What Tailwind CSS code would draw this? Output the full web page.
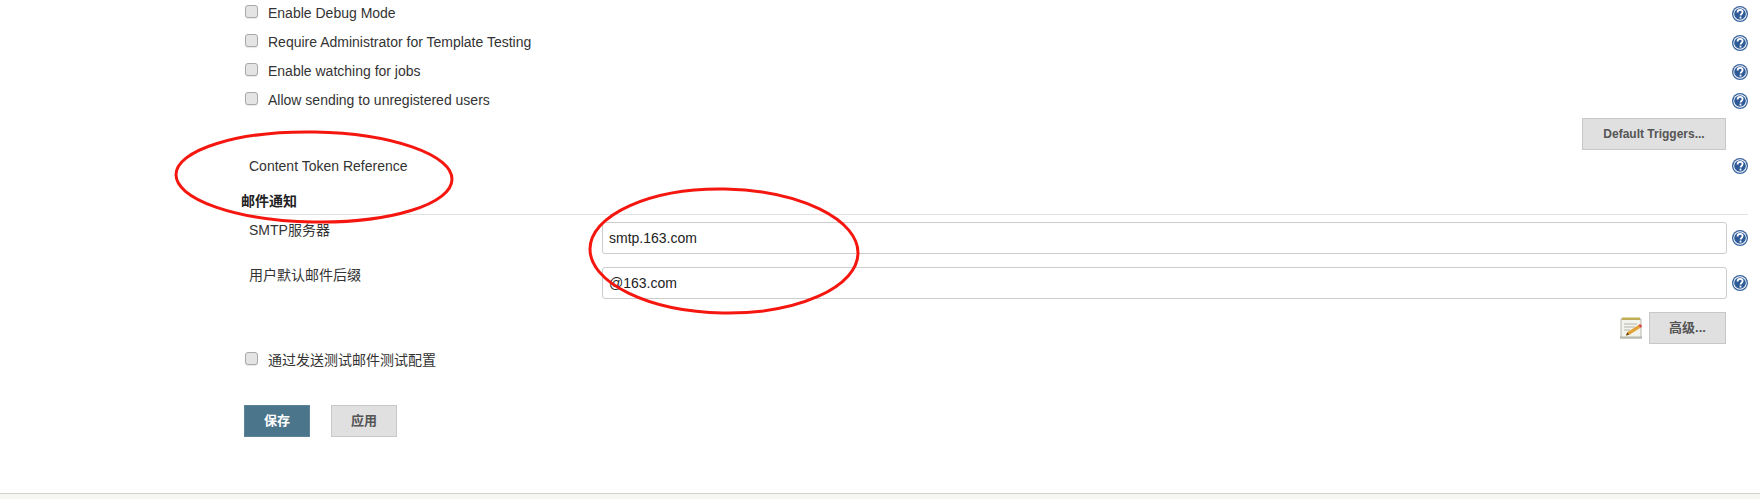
<!DOCTYPE html>
<html lang="en">
<head>
  <meta charset="UTF-8" />
  <title>Jenkins mail config</title>
  <script src="https://cdn.jsdelivr.net/npm/@tailwindcss/browser@4"></script>
</head>
<body class="relative h-[499px] overflow-hidden bg-white text-[#333] text-[14px] font-['Liberation_Sans','Noto_Sans_CJK_SC',sans-serif]">
  <svg class="hidden">
    <symbol id="help" viewBox="0 0 16 16">
      <circle cx="8" cy="8" r="8" fill="#3a659f" />
      <circle cx="8" cy="8" r="6.700" fill="#fff" />
      <circle cx="8" cy="8" r="5.800" fill="#2f5a98" />
      <path d="M5.600 6.400c0-1.600 1-2.500 2.500-2.500s2.500.9 2.500 2.200c0 1.900-2 1.800-2 3.300" fill="none" stroke="#fff" stroke-width="1.800" />
      <rect x="7.600" y="10.600" width="1.800" height="1.900" fill="#fff" />
    </symbol>
  </svg>

  <div class="flex flex-col pl-[241px] pr-[12px] -mt-[1px]">
    <!-- Checkbox options -->
    <div class="flex h-[29px] items-center justify-between">
      <label class="flex items-center"><span class="ml-[4px] mr-[10px] mb-[4px] h-[13px] w-[13px] rounded-[3px] border border-[#a9a9a9] bg-[#e4e4e4] shadow-[0_1px_1px_#e8e8e8]"></span>Enable Debug Mode</label>
      <svg class="h-[16px] w-[16px]"><use href="#help" /></svg>
    </div>
    <div class="flex h-[29px] items-center justify-between">
      <label class="flex items-center"><span class="ml-[4px] mr-[10px] mb-[4px] h-[13px] w-[13px] rounded-[3px] border border-[#a9a9a9] bg-[#e4e4e4] shadow-[0_1px_1px_#e8e8e8]"></span>Require Administrator for Template Testing</label>
      <svg class="h-[16px] w-[16px]"><use href="#help" /></svg>
    </div>
    <div class="flex h-[29px] items-center justify-between">
      <label class="flex items-center"><span class="ml-[4px] mr-[10px] mb-[4px] h-[13px] w-[13px] rounded-[3px] border border-[#a9a9a9] bg-[#e4e4e4] shadow-[0_1px_1px_#e8e8e8]"></span>Enable watching for jobs</label>
      <svg class="h-[16px] w-[16px]"><use href="#help" /></svg>
    </div>
    <div class="flex h-[29px] items-center justify-between">
      <label class="flex items-center"><span class="ml-[4px] mr-[10px] mb-[4px] h-[13px] w-[13px] rounded-[3px] border border-[#a9a9a9] bg-[#e4e4e4] shadow-[0_1px_1px_#e8e8e8]"></span>Allow sending to unregistered users</label>
      <svg class="h-[16px] w-[16px]"><use href="#help" /></svg>
    </div>

    <div class="mt-[3px] flex justify-end pr-[22px]">
      <button class="h-[32px] w-[144px] border border-[#c8c8c8] bg-[#e0e0e0] text-[12px] font-bold text-[#555]">Default Triggers...</button>
    </div>

    <div class="mt-[5px] flex h-[22px] items-center justify-between pl-[8px]">
      <span>Content Token Reference</span>
      <svg class="h-[16px] w-[16px]"><use href="#help" /></svg>
    </div>

    <!-- Section header -->
    <div class="mt-[16px] flex h-[22px] items-center border-b border-[#e2e2e2] pb-[4px] text-[14px] font-bold text-[#222]">邮件通知</div>

    <div class="mt-[7px] flex h-[32px] items-start">
      <label class="w-[361px] pl-[8px] leading-[16px]">SMTP服务器</label>
      <div class="flex h-[32px] w-[1125px] items-center rounded-[3px] border border-[#ccc] bg-white pl-[6px] text-[14px] text-[#222]">smtp.163.com</div>
      <svg class="ml-[5px] mt-[8px] h-[16px] w-[16px]"><use href="#help" /></svg>
    </div>
    <div class="mt-[13px] flex h-[32px] items-start">
      <label class="w-[361px] pl-[8px] leading-[16px]">用户默认邮件后缀</label>
      <div class="flex h-[32px] w-[1125px] items-center rounded-[3px] border border-[#ccc] bg-white pl-[6px] text-[14px] text-[#222]">@163.com</div>
      <svg class="ml-[5px] mt-[8px] h-[16px] w-[16px]"><use href="#help" /></svg>
    </div>

    <div class="mt-[13px] flex items-center justify-end gap-[6px] pr-[22px]">
      <svg class="h-[24px] w-[24px]" viewBox="0 0 24 24">
        <rect x="1" y="20" width="22" height="3" fill="#c9c9c4" />
        <rect x="2" y="3" width="20" height="18" fill="#f3f3ee" stroke="#a8a89c" stroke-width="0.800" />
        <rect x="3" y="1.500" width="18" height="2.500" fill="#bfae57" />
        <path d="M5 8h13M5 11h11M5 14h6" stroke="#b4b4ac" stroke-width="1" />
        <path d="M7 19.500l1.200-3.300 11-7 2.200 2.600-11 7z" fill="#e3a235" />
        <path d="M7 19.500l1.200-3.300 2.200 2.600z" fill="#6b4a22" />
        <path d="M19.200 9.200l2-1.200 2 2.400-1.800 1.400z" fill="#d8453a" />
      </svg>
      <button class="h-[32px] w-[77px] border border-[#c8c8c8] bg-[#e0e0e0] text-[13px] font-bold text-[#555]">高级...</button>
    </div>

    <label class="mt-[2px] flex h-[29px] items-center"><span class="ml-[4px] mr-[10px] mb-[4px] h-[13px] w-[13px] rounded-[3px] border border-[#a9a9a9] bg-[#e4e4e4] shadow-[0_1px_1px_#e8e8e8]"></span>通过发送测试邮件测试配置</label>

    <div class="mt-[30px] flex gap-[21px] pl-[3px]">
      <button class="h-[32px] w-[66px] border border-[#5c8399] bg-[#4b758b] text-[13px] font-bold text-white">保存</button>
      <button class="h-[32px] w-[66px] border border-[#c8c8c8] bg-[#e0e0e0] text-[13px] font-bold text-[#555]">应用</button>
    </div>
  </div>

  <!-- Footer strip -->
  <div class="absolute inset-x-0 bottom-0 h-[6px] border-t border-[#d3d2cb] bg-[#f6f7f3]"></div>

  <!-- Red annotation ellipses drawn over the page -->
  <svg class="pointer-events-none absolute left-0 top-0 h-[499px] w-[1760px]" viewBox="0 0 1760 499" fill="none" stroke="#f5170f" stroke-width="3">
    <ellipse cx="314" cy="177" rx="138" ry="45" transform="rotate(1 314 177)" />
    <ellipse cx="724" cy="251" rx="134" ry="62" transform="rotate(1 724 251)" />
  </svg>
</body>
</html>
